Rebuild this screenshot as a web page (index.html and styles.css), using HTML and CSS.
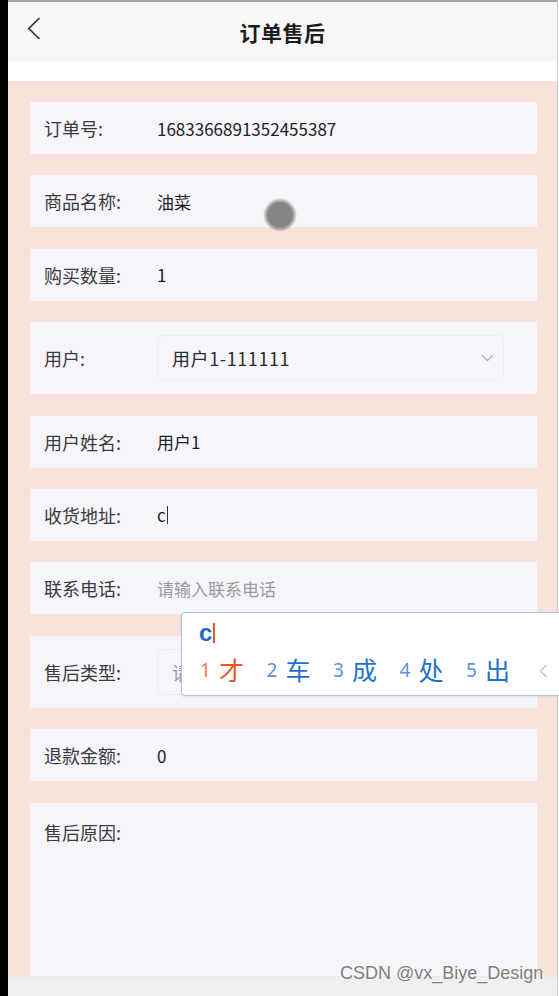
FILE: index.html
```html
<!DOCTYPE html>
<html lang="zh-CN">
<head>
<meta charset="utf-8">
<title>订单售后</title>
<link rel="stylesheet" href="styles.css">
</head>
<body>
<div class="device">
  <div class="bezel"></div>
  <div class="screen">
    <div class="topline"></div>
    <header class="nav">
      <div class="back">
        <svg width="14" height="23" viewBox="0 0 14 23"><polyline points="12.5,1 1.8,11.5 12.5,22" fill="none" stroke="#333" stroke-width="1.7"/></svg>
      </div>
      <div class="nav-title">订单售后</div>
      <div></div>
    </header>
    <div class="spacer"></div>
    <main class="form">
      <div class="row"><span class="label">订单号:</span><span class="value">1683366891352455387</span></div>
      <div class="row"><span class="label">商品名称:</span><span class="value">油菜</span></div>
      <div class="row"><span class="label">购买数量:</span><span class="value">1</span></div>
      <div class="row row-select"><span class="label">用户:</span>
        <div class="select"><span class="select-text">用户1-111111</span>
          <svg width="13" height="8" viewBox="0 0 13 8"><polyline points="1,1 6.5,6.5 12,1" fill="none" stroke="#b3b3b3" stroke-width="1.3"/></svg>
        </div>
      </div>
      <div class="row"><span class="label">用户姓名:</span><span class="value">用户1</span></div>
      <div class="row"><span class="label">收货地址:</span><span class="value">c</span><span class="caret"></span></div>
      <div class="row"><span class="label">联系电话:</span><span class="value placeholder">请输入联系电话</span></div>
      <div class="row row-select"><span class="label">售后类型:</span>
        <div class="select"><span class="select-text placeholder">请选择售后类型</span>
          <svg width="13" height="8" viewBox="0 0 13 8"><polyline points="1,1 6.5,6.5 12,1" fill="none" stroke="#b3b3b3" stroke-width="1.3"/></svg>
        </div>
      </div>
      <div class="row"><span class="label">退款金额:</span><span class="value">0</span></div>
      <div class="row row-area"><span class="label">售后原因:</span></div>
    </main>
    <footer class="bottombar"></footer>
  </div>
  <div class="edge"></div>

  <div class="touch-dot"></div>

  <div class="ime">
    <div class="ime-input"><span class="ime-text">c</span><span class="ime-caret"></span></div>
    <div class="ime-cands">
      <span class="cand cand-first"><span class="cand-num">1</span><span class="cand-char">才</span></span>
      <span class="cand"><span class="cand-num">2</span><span class="cand-char">车</span></span>
      <span class="cand"><span class="cand-num">3</span><span class="cand-char">成</span></span>
      <span class="cand"><span class="cand-num">4</span><span class="cand-char">处</span></span>
      <span class="cand"><span class="cand-num">5</span><span class="cand-char">出</span></span>
      <svg class="ime-prev" width="9" height="14" viewBox="0 0 9 14"><polyline points="7.5,1 1.5,7 7.5,13" fill="none" stroke="#a9c5e6" stroke-width="1.4"/></svg>
    </div>
  </div>

  <div class="watermark">CSDN @vx_Biye_Design</div>
</div>
</body>
</html>
```
FILE: styles.css
```css
* {
  box-sizing: border-box;
  margin: 0;
  padding: 0;
}

body {
  margin: 0;
  width: 559px;
  height: 996px;
  overflow: hidden;
  font-family: "Noto Sans CJK SC", "Noto Sans", sans-serif;
  background: #fff;
}

.device {
  position: relative;
  display: flex;
  width: 559px;
  height: 996px;
  overflow: hidden;
}

.bezel {
  width: 8px;
  flex: none;
  background: #000;
}

.screen {
  flex: 1;
  min-width: 0;
  display: flex;
  flex-direction: column;
}

.edge {
  width: 2px;
  flex: none;
  border-left: 1px solid #cdcdcd;
  background: #fff;
}

.topline {
  height: 2px;
  flex: none;
  background: #a4a4a4;
}

.nav {
  height: 59px;
  flex: none;
  background: #f7f7f7;
  display: grid;
  grid-template-columns: 1fr auto 1fr;
  align-items: center;
}

.back {
  padding-left: 19px;
  display: flex;
  align-items: center;
  margin-top: -6px;
}

.nav-title {
  font-size: 21px;
  font-weight: 700;
  color: #1c1c1c;
  letter-spacing: 0.5px;
}

.spacer {
  height: 20px;
  flex: none;
  background: #fff;
}

.form {
  flex: 1;
  min-height: 0;
  overflow: hidden;
  background: #f7e3da;
  padding: 21px 20px 0 22px;
  display: flex;
  flex-direction: column;
  gap: 21.3px;
}

.row {
  flex: none;
  height: 52px;
  background: #f6f5fb;
  display: flex;
  align-items: center;
  padding-left: 14px;
}

.row-select {
  height: 72.5px;
}

.row-area {
  height: 200px;
  align-items: flex-start;
  padding-top: 16px;
}

.label {
  width: 113px;
  flex: none;
  font-size: 18px;
  color: #3b3b3b;
}

.value {
  font-size: 17px;
  color: #222;
}

.placeholder {
  color: #9a9a9a;
}

.caret {
  width: 1px;
  height: 18px;
  background: #333;
  margin-left: 1px;
}

.select {
  width: 347px;
  height: 46px;
  border: 1px solid #ececf1;
  border-radius: 6px;
  display: flex;
  align-items: center;
  justify-content: space-between;
  padding: 0 9px 0 14px;
}

.select-text {
  font-size: 18px;
  letter-spacing: 0.6px;
  color: #2a2a2a;
}

.select-text.placeholder {
  color: #9a9a9a;
}

.bottombar {
  height: 20px;
  flex: none;
  background: linear-gradient(#e9ecea, #eff1f0 4px);
}

.touch-dot {
  position: absolute;
  left: 263px;
  top: 198px;
  width: 34px;
  height: 34px;
  border-radius: 50%;
  background: radial-gradient(circle, #858585 0, #858585 12px, rgba(133, 133, 133, 0.55) 14.5px, rgba(133, 133, 133, 0) 17px);
}

.ime {
  position: absolute;
  left: 181px;
  top: 612px;
  width: 400px;
  height: 84px;
  background: #fff;
  border: 1px solid #a9c5e3;
  border-radius: 4px;
  box-shadow: 0 1px 3px rgba(0, 0, 0, 0.08);
}

.ime-input {
  height: 40px;
  display: flex;
  align-items: center;
  padding-left: 17px;
}

.ime-text {
  font-family: "Liberation Sans", sans-serif;
  font-size: 24px;
  font-weight: 700;
  color: #1a67c6;
  line-height: 1;
}

.ime-caret {
  width: 1.5px;
  height: 20px;
  background: #e6512c;
  margin-left: 1px;
}

.ime-cands {
  height: 32px;
  display: flex;
  align-items: center;
  padding-left: 18px;
}

.cand {
  width: 66.5px;
  flex: none;
  display: flex;
  align-items: center;
  gap: 8px;
  line-height: 1;
}

.cand-num {
  font-family: "Noto Sans", sans-serif;
  font-size: 19px;
  color: #5f93d2;
  margin-top: 3px;
}

.cand-char {
  font-size: 25px;
  color: #1f72c8;
}

.cand-first .cand-num {
  color: #f07a45;
}

.cand-first .cand-char {
  color: #e9552b;
}

.ime-prev {
  margin-left: 6px;
  margin-top: 4px;
}

.watermark {
  position: absolute;
  left: 340px;
  top: 963px;
  font-family: "Liberation Sans", sans-serif;
  font-size: 18px;
  color: #7d7d7d;
  text-shadow: 0 0 1px #fff, 0 0 2px #fff;
  white-space: nowrap;
}
```
